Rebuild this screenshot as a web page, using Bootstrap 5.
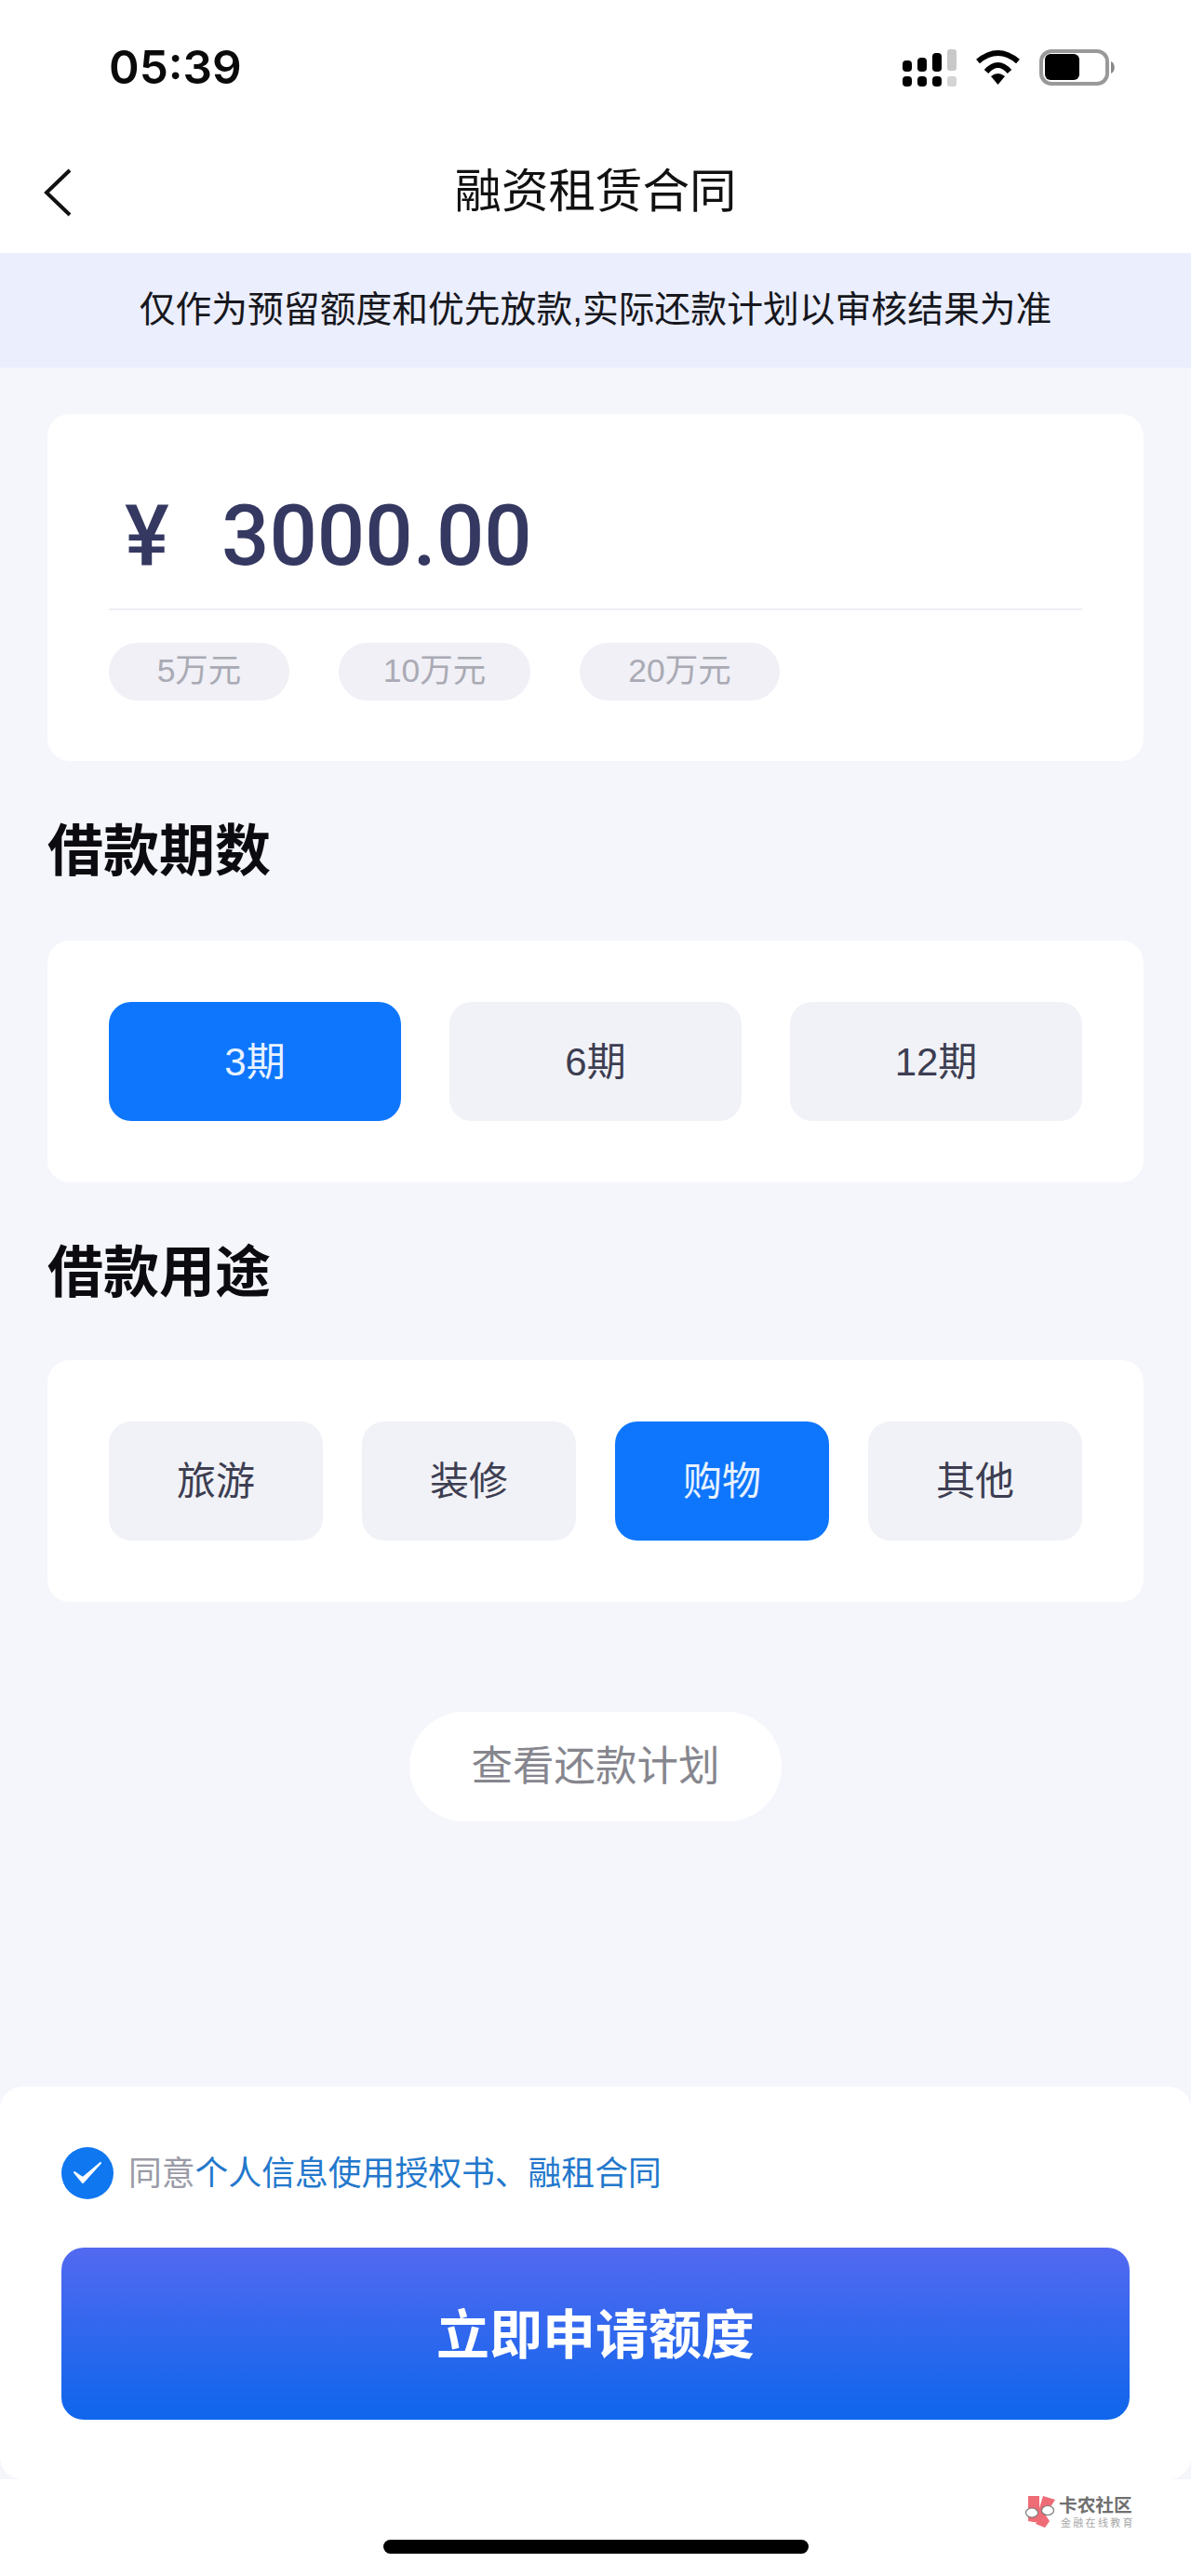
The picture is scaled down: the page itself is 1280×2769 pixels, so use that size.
<!DOCTYPE html>
<html lang="zh-CN">
<head>
    <meta charset="UTF-8">
    <meta name="viewport" content="width=device-width, initial-scale=1">
    <title>融资租赁合同</title>
    <link rel="stylesheet" href="https://cdn.jsdelivr.net/npm/bootstrap@5.3.0/dist/css/bootstrap.min.css">
    <style>
        html, body { margin: 0; background: #fff; }
        body { font-family: "Liberation Sans", "Noto Sans CJK SC", sans-serif; color: #111; }
        .phone { width: 1280px; height: 2769px; background: #f4f6fb; overflow: hidden; display: flex; flex-direction: column; }
        .top-area { background: #fff; height: 272px; }
        .status-row { height: 144px; padding: 0 80px 0 117px; }
        .clock { font-family: Inter, "Liberation Sans", sans-serif; font-size: 49.5px; font-weight: 600; line-height: 1; padding-top: 2px; color: #0a0a0a; }
        .title-row { height: 128px; position: relative; }
        .back-arrow { position: absolute; left: 46px; top: 36px; }
        .page-title { font-size: 50.5px; line-height: 1; margin-top: -4px; }
        .notice-bar { height: 123px; background: #ebeefc; font-size: 38.8px; color: #16171d; }
        .white-box { background: #fff; border-radius: 24px; margin: 0 51px; }
        .amount-box { height: 373px; margin-top: 50px; padding: 0 66px; }
        .amount-row { height: 211px; padding-top: 54px; border-bottom: 2px solid #eeeff3; color: #353860; font-family: Roboto, "Liberation Sans", sans-serif; font-weight: 500; }
        .yen { font-size: 90px; width: 121px; padding-left: 17px; line-height: 1; }
        .amount-val { font-size: 90.5px; line-height: 1; }
        .quick-row { margin-top: 35px; gap: 53px; }
        .quick-pill { height: 62px; border-radius: 31px; background: #f0f0f6; color: #aaaab4; font-size: 35.5px; }
        .sec-title { font-size: 60px; font-weight: 700; line-height: 1; color: #0c0c10; margin: 68px 51px 0; height: 125px; }
        .sec-tight { height: 123px; }
        .opt-box { height: 260px; padding: 66px; }
        .opt-btn { height: 128px; border-radius: 24px; background: #f1f2f7; color: #3d3e52; font-size: 42px; border: 0; padding: 0; }
        .opt-btn.active { background: #0e76fd; color: #e8f2ff; }
        .plan-pill { width: 400px; height: 118px; border-radius: 59px; background: #fff; color: #86868e; font-size: 44.5px; margin: 118px auto 0; }
        .bottom-sheet { margin-top: auto; height: 422px; background: #fff; border-radius: 24px; padding: 65px 66px 0; flex-shrink: 0; }
        .tick-circle { width: 56px; height: 56px; border-radius: 50%; background: #0f77f0; flex-shrink: 0; }
        .agree-row { height: 56px; gap: 16px; font-size: 35.8px; color: #9a9ba6; }
        .agree-text { padding-top: 4px; }
        .agree-row a { color: #2378cc; text-decoration: none; }
        .apply-btn { display: block; width: 100%; height: 185px; margin-top: 52px; padding: 4px 0 0; border: 0; border-radius: 24px; background: linear-gradient(180deg, #5269f0 0%, #0e66ec 100%); color: #fff; font-size: 57px; font-weight: 700; }
        .foot-strip { height: 104px; background: #fff; position: relative; flex-shrink: 0; padding-top: 65px; }
        .home-bar { width: 457px; height: 15px; border-radius: 8px; background: #000; margin: 0 0 0 412px; }
        .wm { position: absolute; left: 1100px; top: 15px; gap: 2px; }
        .wm-a { font-size: 19.7px; font-weight: 700; line-height: 1; color: #707070; }
        .wm-b { font-size: 11px; line-height: 1; color: #a8a8a8; letter-spacing: 2.3px; margin-top: 3px; padding-left: 2px; white-space: nowrap; }
    </style>
</head>
<body>
    <div class="phone">
        <div class="top-area">
            <!-- status bar -->
            <div class="status-row d-flex justify-content-between align-items-center">
                <div class="clock">05:39</div>
                <svg width="232" height="46" viewBox="0 0 232 46">
                    <g fill="#000">
                        <rect x="2" y="16" width="10" height="12" rx="4"/><rect x="18" y="13" width="10" height="15" rx="4"/><rect x="34" y="8" width="10" height="20" rx="4"/>
                        <rect x="2" y="33" width="10" height="11" rx="4"/><rect x="18" y="33" width="10" height="11" rx="4"/><rect x="34" y="33" width="10" height="11" rx="4"/>
                    </g>
                    <rect x="50" y="4" width="10" height="23" rx="3" fill="#c8c8c8"/><rect x="50" y="33" width="10" height="11" rx="3" fill="#d4d4d4"/>
                    <g fill="none" stroke="#000" stroke-width="6">
                        <path d="M83 17 Q104.5 -1 126 17"/>
                        <path d="M92 28 Q104.5 14 117 28"/>
                    </g>
                    <path d="M97 33 Q104.5 27 112 33 L104.5 42 Z" fill="#000"/>
                    <rect x="151" y="6" width="71" height="35" rx="11" fill="none" stroke="#999" stroke-width="4"/>
                    <rect x="155" y="9" width="37" height="28" rx="6" fill="#000"/>
                    <path d="M226 17 C231 19 231 28 226 30 Z" fill="#888"/>
                </svg>
            </div>
            <div class="title-row d-flex justify-content-center align-items-center">
                <svg class="back-arrow" width="34" height="54" viewBox="0 0 34 54"><path d="M29 3 L4 27 L29 51" fill="none" stroke="#111" stroke-width="4"/></svg>
                <div class="page-title">融资租赁合同</div>
            </div>
        </div>

        <div class="notice-bar d-flex justify-content-center align-items-center">仅作为预留额度和优先放款,实际还款计划以审核结果为准</div>

        <div class="white-box amount-box">
            <div class="amount-row d-flex align-items-center">
                <span class="yen">¥</span>
                <span class="amount-val">3000.00</span>
            </div>
            <div class="quick-row d-flex">
                <div class="quick-pill d-flex justify-content-center align-items-center" style="width:194px">5万元</div>
                <div class="quick-pill d-flex justify-content-center align-items-center" style="width:206px">10万元</div>
                <div class="quick-pill d-flex justify-content-center align-items-center" style="width:215px">20万元</div>
            </div>
        </div>

        <div class="sec-title d-flex align-items-start">借款期数</div>
        <div class="white-box opt-box d-flex justify-content-between">
            <button class="opt-btn active" style="width:314px">3期</button>
            <button class="opt-btn" style="width:314px">6期</button>
            <button class="opt-btn" style="width:314px">12期</button>
        </div>

        <div class="sec-title sec-tight d-flex align-items-start">借款用途</div>
        <div class="white-box opt-box d-flex justify-content-between">
            <button class="opt-btn" style="width:230px">旅游</button>
            <button class="opt-btn" style="width:230px">装修</button>
            <button class="opt-btn active" style="width:230px">购物</button>
            <button class="opt-btn" style="width:230px">其他</button>
        </div>

        <div class="plan-pill d-flex justify-content-center align-items-center">查看还款计划</div>

        <div class="bottom-sheet">
            <div class="agree-row d-flex align-items-center">
                <span class="tick-circle d-flex justify-content-center align-items-center">
                    <svg width="34" height="28" viewBox="0 0 34 28"><path d="M3 13 L12 24 L31 3 L12 19 Z" fill="#fff" stroke="#fff" stroke-width="2" stroke-linejoin="round"/></svg>
                </span>
                <span class="agree-text">同意<a href="#">个人信息使用授权书、融租合同</a></span>
            </div>
            <button class="apply-btn">立即申请额度</button>
        </div>

        <div class="foot-strip">
            <div class="home-bar"></div>
            <!-- watermark -->
            <div class="wm d-flex align-items-start">
                <svg width="36" height="40" viewBox="0 0 36 40">
                    <path d="M5 3 L17 3 L17 16 L21 3 L34 7 L27 18 L24 24 L28 30 L23 37 L13 33 L17 27 L17 32 L5 30 Z" fill="#ee6c76"/>
                    <ellipse cx="9" cy="21" rx="6.5" ry="5" fill="#fff" stroke="#777" stroke-width="1.2"/>
                    <ellipse cx="26" cy="18.5" rx="6.5" ry="5" fill="#fff" stroke="#777" stroke-width="1.2"/>
                </svg>
                <div class="pt-1">
                    <div class="wm-a">卡农社区</div>
                    <div class="wm-b">金融在线教育</div>
                </div>
            </div>
        </div>
    </div>

    <script src="https://cdn.jsdelivr.net/npm/bootstrap@5.3.0/dist/js/bootstrap.bundle.min.js"></script>
</body>
</html>
